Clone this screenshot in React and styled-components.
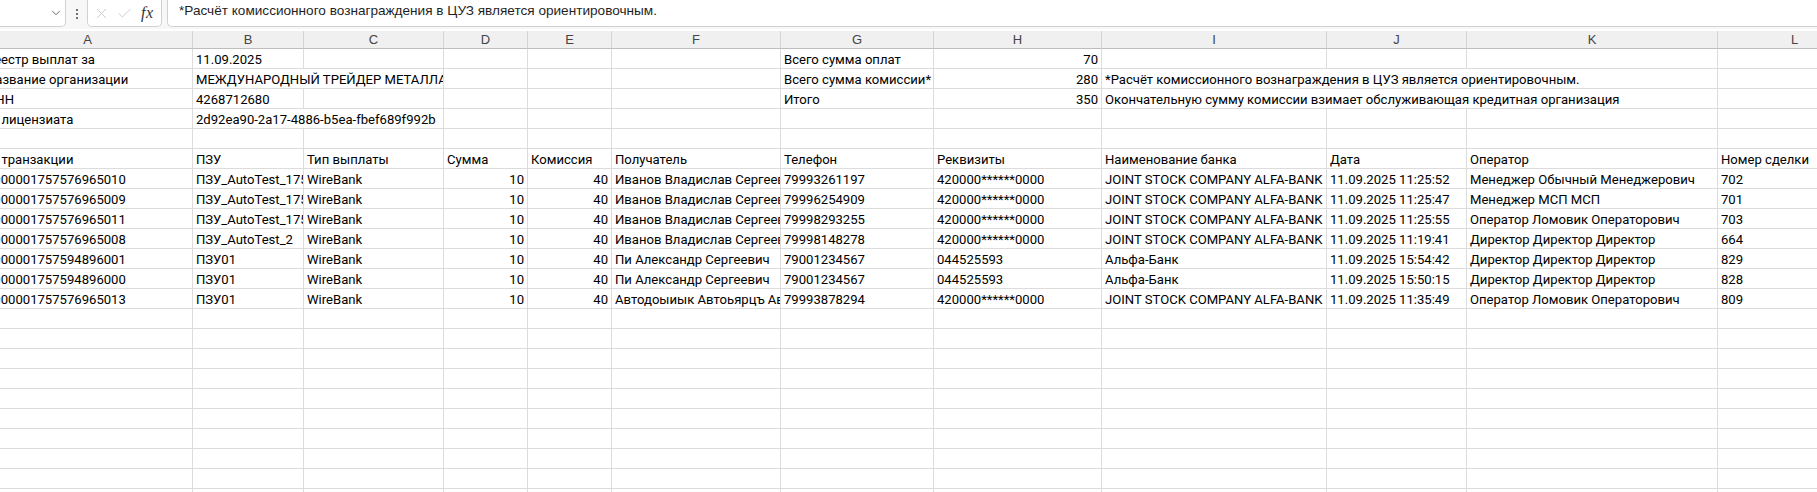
import React from "react";
import styled, { createGlobalStyle } from "styled-components";
import { ChevronDown, X, Check } from "lucide-react";

const GlobalStyle = createGlobalStyle`
  html, body { margin: 0; padding: 0; background: #fff; }
  body {
    width: 1817px;
    height: 492px;
    overflow: hidden;
    font-family: "Liberation Sans", Arial, sans-serif;
    color: #000;
  }
`;

const COLS = [
  { key: "A", w: 210 },
  { key: "B", w: 111 },
  { key: "C", w: 140 },
  { key: "D", w: 84 },
  { key: "E", w: 84 },
  { key: "F", w: 169 },
  { key: "G", w: 153 },
  { key: "H", w: 168 },
  { key: "I", w: 225 },
  { key: "J", w: 140 },
  { key: "K", w: 251 },
  { key: "L", w: 154 },
];

// one entry per column; {t, r: right aligned, s: span}
const TOP = [
  [{ t: "Реестр выплат за" }, { t: "11.09.2025" }, {}, {}, {}, {}, { t: "Всего сумма оплат" }, { t: "70", r: true }, {}, {}, {}, {}],
  [{ t: "Название организации" }, { t: "МЕЖДУНАРОДНЫЙ ТРЕЙДЕР МЕТАЛЛА", s: 2 }, {}, {}, {}, { t: "Всего сумма комиссии*" }, { t: "280", r: true }, { t: "*Расчёт комиссионного вознаграждения в ЦУЗ является ориентировочным.", s: 3 }, {}],
  [{ t: "ИНН" }, { t: "4268712680" }, {}, {}, {}, {}, { t: "Итого" }, { t: "350", r: true }, { t: "Окончательную сумму комиссии взимает обслуживающая кредитная организация", s: 3 }, {}],
  [{ t: "ID лицензиата" }, { t: "2d92ea90-2a17-4886-b5ea-fbef689f992b", s: 2 }, {}, {}, {}, {}, {}, {}, {}, {}, {}],
  [{}, {}, {}, {}, {}, {}, {}, {}, {}, {}, {}, {}],
];

const HEAD = ["ID транзакции", "ПЗУ", "Тип выплаты", "Сумма", "Комиссия", "Получатель", "Телефон", "Реквизиты", "Наименование банка", "Дата", "Оператор", "Номер сделки"];

const ROWS = [
  ["1000001757576965010", "ПЗУ_AutoTest_1757576965", "WireBank", "10", "40", "Иванов Владислав Сергеевич", "79993261197", "420000******0000", "JOINT STOCK COMPANY ALFA-BANK", "11.09.2025 11:25:52", "Менеджер Обычный Менеджерович", "702"],
  ["1000001757576965009", "ПЗУ_AutoTest_1757576965", "WireBank", "10", "40", "Иванов Владислав Сергеевич", "79996254909", "420000******0000", "JOINT STOCK COMPANY ALFA-BANK", "11.09.2025 11:25:47", "Менеджер МСП МСП", "701"],
  ["1000001757576965011", "ПЗУ_AutoTest_1757576965", "WireBank", "10", "40", "Иванов Владислав Сергеевич", "79998293255", "420000******0000", "JOINT STOCK COMPANY ALFA-BANK", "11.09.2025 11:25:55", "Оператор Ломовик Операторович", "703"],
  ["1000001757576965008", "ПЗУ_AutoTest_2", "WireBank", "10", "40", "Иванов Владислав Сергеевич", "79998148278", "420000******0000", "JOINT STOCK COMPANY ALFA-BANK", "11.09.2025 11:19:41", "Директор Директор Директор", "664"],
  ["1000001757594896001", "ПЗУ01", "WireBank", "10", "40", "Пи Александр Сергеевич", "79001234567", "044525593", "Альфа-Банк", "11.09.2025 15:54:42", "Директор Директор Директор", "829"],
  ["1000001757594896000", "ПЗУ01", "WireBank", "10", "40", "Пи Александр Сергеевич", "79001234567", "044525593", "Альфа-Банк", "11.09.2025 15:50:15", "Директор Директор Директор", "828"],
  ["1000001757576965013", "ПЗУ01", "WireBank", "10", "40", "Автодоыиык Автоьярцъ Автоьярцъевич", "79993878294", "420000******0000", "JOINT STOCK COMPANY ALFA-BANK", "11.09.2025 11:35:49", "Оператор Ломовик Операторович", "809"],
];

const EMPTY_ROWS = 10;

const FormulaBar = styled.div`
  display: flex;
  align-items: flex-start;
  height: 29px;
  background: #f7f7f7;
  box-sizing: border-box;
`;

const Box = styled.div`
  height: 27px;
  box-sizing: border-box;
  background: #fff;
  border: 1px solid #d1d1d1;
  border-top: none;
  border-radius: 0 0 5px 5px;
  display: flex;
  align-items: center;
`;

const NameBox = styled(Box)`
  width: 66px;
  border-left: none;
  border-radius: 0 0 5px 0;
  justify-content: flex-end;
  padding-right: 2px;
  color: #555;
`;

const Dots = styled.div`
  width: 21px;
  height: 27px;
  display: flex;
  flex-direction: column;
  align-items: center;
  justify-content: center;
  gap: 2px;
  & span {
    width: 2px;
    height: 2px;
    background: #444;
    border-radius: 1px;
  }
`;

const EditBox = styled(Box)`
  width: 75px;
  padding-left: 5px;
  gap: 6px;
  color: #c4c4c4;
`;

const Fx = styled.span`
  font-family: "Liberation Serif", "DejaVu Serif", serif;
  font-style: italic;
  font-size: 16px;
  color: #333;
  margin-left: 2px;
  letter-spacing: 0.5px;
`;

const FormulaInput = styled(Box)`
  flex: 1;
  margin-left: 5px;
  border-right: none;
  border-radius: 0 0 0 5px;
  align-items: flex-start;
  padding: 3px 0 0 11px;
  font-size: 13.6px;
  line-height: 15px;
  color: #1f1f1f;
`;

const Sheet = styled.div`
  overflow: hidden;
  width: 1817px;
`;

const Grid = styled.div`
  display: grid;
  grid-template-columns: ${COLS.map((c) => c.w + "px").join(" ")};
  grid-auto-rows: 20px;
  margin-left: -17px;
  width: max-content;
`;

const ColHead = styled.div`
  height: 18px;
  box-sizing: border-box;
  background: #f0f0f0;
  border-right: 1px solid #d4d4d4;
  border-bottom: 1px solid #bdbdbd;
  color: #444;
  font-size: 13px;
  line-height: 18px;
  text-align: center;
  align-self: end;
`;

const HeadRow = styled.div`
  display: contents;
`;

const Cell = styled.div`
  grid-column: span ${(p) => p.$span || 1};
  box-sizing: border-box;
  height: 20px;
  border-right: 1px solid #dcdcdc;
  border-bottom: 1px solid #dcdcdc;
  padding: 1px 3px 0 3px;
  font-family: Roboto, "Liberation Sans", sans-serif;
  font-size: 13.1px;
  line-height: 19px;
  white-space: nowrap;
  overflow: hidden;
  text-align: ${(p) => (p.$right ? "right" : "left")};
`;

function Row({ cells }) {
  return cells.map((c, i) => (
    <Cell key={i} $span={c.s} $right={c.r}>
      {c.t || ""}
    </Cell>
  ));
}

export default function App() {
  const numeric = [3, 4];
  return (
    <>
      <GlobalStyle />
      <FormulaBar>
        <NameBox>
          <ChevronDown size={14} strokeWidth={1.5} />
        </NameBox>
        <Dots>
          <span />
          <span />
          <span />
        </Dots>
        <EditBox>
          <X size={17} strokeWidth={1.2} />
          <Check size={17} strokeWidth={1.2} />
          <Fx>fx</Fx>
        </EditBox>
        <FormulaInput>*Расчёт комиссионного вознаграждения в ЦУЗ является ориентировочным.</FormulaInput>
      </FormulaBar>
      <Sheet>
        <Grid>
          <HeadRow>
            {COLS.map((c) => (
              <ColHead key={c.key}>{c.key}</ColHead>
            ))}
          </HeadRow>
          {TOP.map((r, i) => (
            <Row key={"t" + i} cells={r} />
          ))}
          <Row cells={HEAD.map((t) => ({ t }))} />
          {ROWS.map((r, i) => (
            <Row key={"d" + i} cells={r.map((t, j) => ({ t, r: numeric.includes(j) }))} />
          ))}
          {Array.from({ length: EMPTY_ROWS }).map((_, i) => (
            <Row key={"e" + i} cells={COLS.map(() => ({}))} />
          ))}
        </Grid>
      </Sheet>
    </>
  );
}
